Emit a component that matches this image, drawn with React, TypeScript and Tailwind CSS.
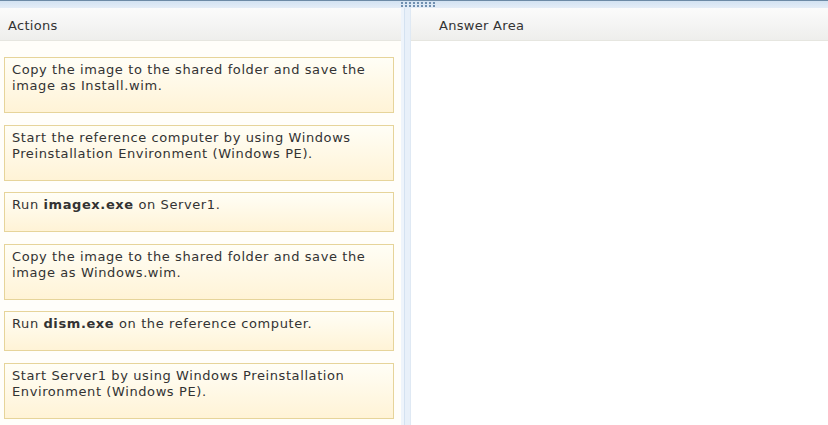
import React from 'react';

const items: React.ReactNode[] = [
  <>Copy the image to the shared folder and save the image as Install.wim.</>,
  <>Start the reference computer by using Windows Preinstallation Environment (Windows PE).</>,
  <>Run <b>imagex.exe</b> on Server1.</>,
  <>Copy the image to the shared folder and save the image as Windows.wim.</>,
  <>Run <b>dism.exe</b> on the reference computer.</>,
  <>Start Server1 by using Windows Preinstallation Environment (Windows PE).</>,
];

function Grip() {
  return (
    <div className="flex gap-[2px]">
      {Array.from({ length: 9 }).map((_, i) => (
        <div key={i} className="flex flex-col gap-[1px]">
          <div className="w-[2px] h-[2px] bg-[#6f8fb0]" />
          <div className="w-[2px] h-[2px] bg-[#6f8fb0]" />
        </div>
      ))}
    </div>
  );
}

export default function App() {
  return (
    <div className="w-[828px] h-[425px] overflow-hidden bg-white text-[#333] flex flex-col" style={{ fontFamily: '"DejaVu Sans", Verdana, sans-serif' }}>
      {/* top band */}
      <div className="h-[8px] border-t border-[#6d8aa6] bg-gradient-to-b from-[#d3e2f2] to-[#e4edf7] flex">
        <div className="w-[401px]" />
        <div className="pt-[1px]"><Grip /></div>
      </div>
      <div className="flex flex-1 min-h-0">
        {/* left */}
        <div className="w-[401px] flex flex-col bg-[#fffefa]">
          <div className="h-[33px] flex items-center pt-[3px] pl-[8px] text-[13px] tracking-[0.3px] bg-gradient-to-b from-[#fbfbfb] to-[#eeeeec] border-b border-[#e6e6e0]">
            Actions
          </div>
          <div className="flex flex-col gap-[11.5px] pt-[16px] pl-[4px] pr-[7px]">
            {items.map((it, i) => (
              <div
                key={i}
                className="border border-[#e6d49a] bg-gradient-to-b from-[#fffef6] to-[#fff3d6] pl-[7px] pr-[4px] pt-[4px] pb-[18px] text-[13px] tracking-[0.6px] leading-[16px] text-[#333]"
              >
                <div>{it}</div>
              </div>
            ))}
          </div>
        </div>
        {/* splitter */}
        <div className="w-[10px] flex">
          <div className="w-[3px] bg-[#eef4fb]" />
          <div className="w-[1px] bg-[#d4e2f1]" />
          <div className="w-[5px] bg-[#e8f0f9]" />
          <div className="w-[1px] bg-[#dfe9f4]" />
        </div>
        {/* right */}
        <div className="flex-1 flex flex-col">
          <div className="h-[33px] flex items-center pt-[3px] pl-[28px] text-[13px] tracking-[0.3px] bg-gradient-to-b from-[#fbfbfb] to-[#eeeeec] border-b border-[#e6e6e0]">
            Answer Area
          </div>
        </div>
      </div>
    </div>
  );
}
